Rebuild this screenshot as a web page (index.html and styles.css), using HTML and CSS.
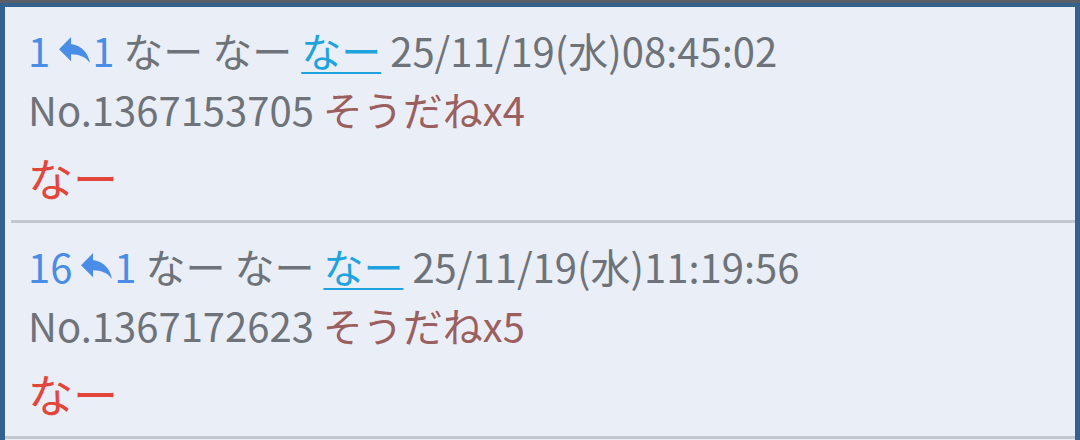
FILE: index.html
```html
<!DOCTYPE html>
<html lang="ja">
<head>
  <meta charset="UTF-8" />
  <meta name="viewport" content="width=device-width, initial-scale=1.0"/>
  <title>スレッド</title>
  <link rel="stylesheet" href="styles.css">
</head>
<body>

<div class="frame">
  <div class="post">
    <div class="head">
      <span class="num">1</span>
      <svg class="reply" viewBox="3 5 18 15"><path d="M10 9V5l-7 7 7 7v-4.1c5 0 8.5 1.6 11 5.1-1-5-4-10-11-11z"/></svg>
      <span class="num">1</span>
      <span class="name">なー</span>
      <span class="name">なー</span>
      <a class="mail" href="#">なー</a>
      <span class="date">25/11/19(水)08:45:02</span>
    </div>
    <div class="meta">
      <span class="no">No.1367153705</span>
      <span class="sod">そうだねx4</span>
    </div>
    <div class="body">なー</div>
  </div>

  <div class="post">
    <div class="head">
      <span class="num">16</span>
      <svg class="reply" viewBox="3 5 18 15"><path d="M10 9V5l-7 7 7 7v-4.1c5 0 8.5 1.6 11 5.1-1-5-4-10-11-11z"/></svg>
      <span class="num">1</span>
      <span class="name">なー</span>
      <span class="name">なー</span>
      <a class="mail" href="#">なー</a>
      <span class="date">25/11/19(水)11:19:56</span>
    </div>
    <div class="meta">
      <span class="no">No.1367172623</span>
      <span class="sod">そうだねx5</span>
    </div>
    <div class="body">なー</div>
  </div>
</div>

</body>
</html>
```

FILE: styles.css
```css
body {
  margin: 0;
  background-color: #5a5e66;
  font-family: "Noto Sans CJK JP", "Noto Sans", sans-serif;
  height: 440px;
  overflow: hidden;
}

.frame {
  margin-top: 3px;
  background-color: #eaeef6;
  border: 5px solid #35618f;
  border-top-width: 4px;
  border-bottom: none;
  min-height: 440px;
}

.post {
  padding: 14px 0 0 17px;
  border-bottom: 3px solid #c3c7cf;
  margin-left: 6px;
  height: 199px;
}

.post + .post {
  margin-left: 0;
  padding-left: 23px;
}

.head, .meta {
  font-size: 40px;
  line-height: 59px;
  color: #6e737a;
  white-space: nowrap;
}

.num {
  color: #4a8de6;
}

.reply {
  width: 31px;
  height: 26px;
  fill: #4a8de6;
  margin-right: -7px;
  vertical-align: 4px;
}

.mail {
  color: #1ea3de;
  text-decoration: underline;
  text-underline-offset: 5px;
  text-decoration-thickness: 2px;
}

.sod {
  color: #9c5f5f;
}

.body {
  font-size: 45px;
  line-height: 59px;
  color: #e2463b;
  margin-top: 9px;
}
```
